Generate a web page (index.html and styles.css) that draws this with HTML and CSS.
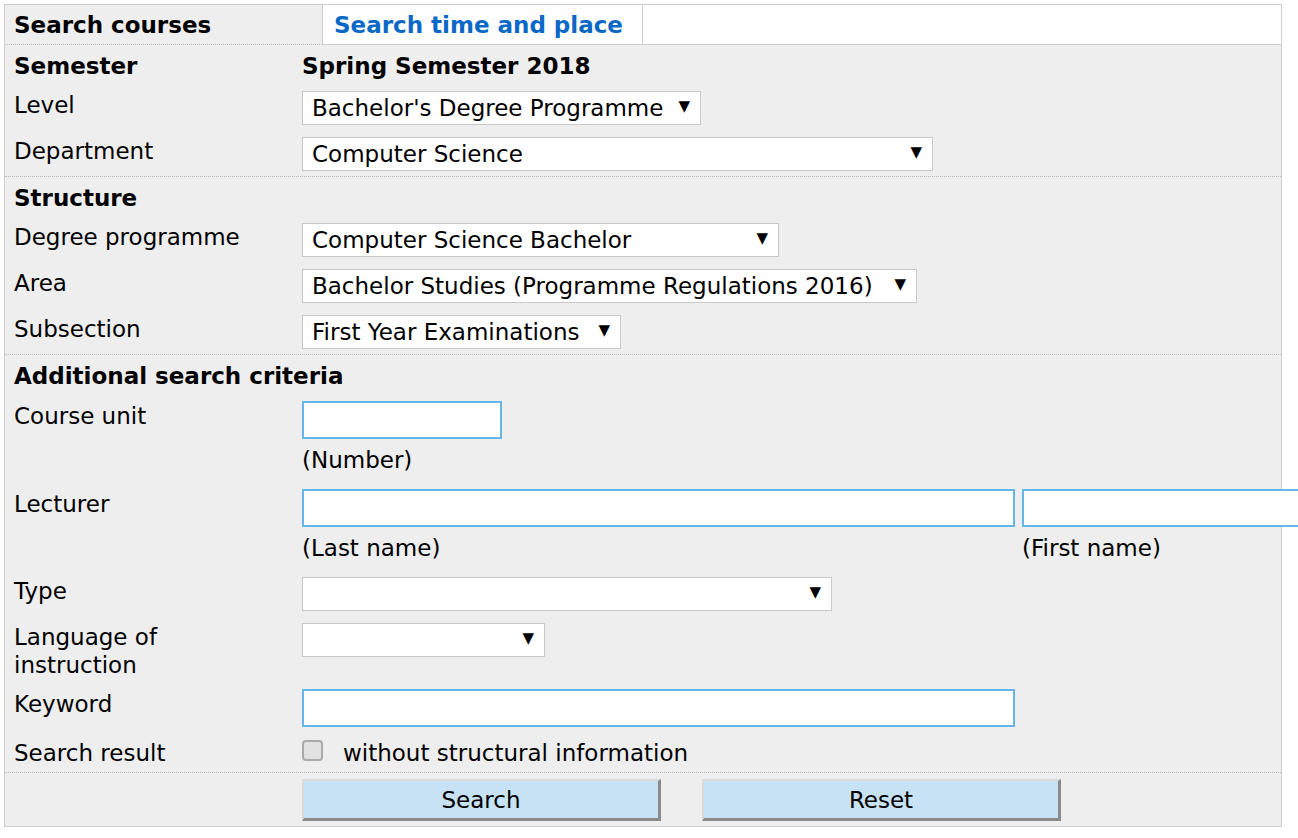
FILE: index.html
```html
<!DOCTYPE html>
<html lang="en">
<head>
<meta charset="utf-8">
<title>Search courses</title>
<link rel="stylesheet" href="styles.css">
</head>
<body>
<div class="panel">
  <div class="tabs">
    <div class="tab tab-current">Search courses</div>
    <a class="tab tab-link" href="#">Search time and place</a>
    <div class="tab-fill"></div>
  </div>

  <div class="section">
    <div class="row heading">
      <div class="lbl">Semester</div>
      <div class="val">Spring Semester 2018</div>
    </div>
    <div class="row">
      <div class="lbl">Level</div>
      <div class="val"><div class="sel w-level"><span>Bachelor's Degree Programme</span><span class="arrow">▼</span></div></div>
    </div>
    <div class="row">
      <div class="lbl">Department</div>
      <div class="val"><div class="sel w-dept"><span>Computer Science</span><span class="arrow">▼</span></div></div>
    </div>
  </div>

  <div class="section">
    <div class="row heading">
      <div class="lbl">Structure</div>
    </div>
    <div class="row">
      <div class="lbl">Degree programme</div>
      <div class="val"><div class="sel w-degree"><span>Computer Science Bachelor</span><span class="arrow">▼</span></div></div>
    </div>
    <div class="row">
      <div class="lbl">Area</div>
      <div class="val"><div class="sel w-area"><span>Bachelor Studies (Programme Regulations 2016)</span><span class="arrow">▼</span></div></div>
    </div>
    <div class="row">
      <div class="lbl">Subsection</div>
      <div class="val"><div class="sel w-sub"><span>First Year Examinations</span><span class="arrow">▼</span></div></div>
    </div>
  </div>

  <div class="section">
    <div class="row heading">
      <div class="lbl wide">Additional search criteria</div>
    </div>
    <div class="row">
      <div class="lbl lbl-input">Course unit</div>
      <div class="val">
        <div class="field">
          <input class="inp w-unit" type="text">
          <div class="hint">(Number)</div>
        </div>
      </div>
    </div>
    <div class="row">
      <div class="lbl lbl-input">Lecturer</div>
      <div class="val pair">
        <div class="field">
          <input class="inp w-long" type="text">
          <div class="hint">(Last name)</div>
        </div>
        <div class="field">
          <input class="inp w-long" type="text">
          <div class="hint">(First name)</div>
        </div>
      </div>
    </div>
    <div class="row">
      <div class="lbl">Type</div>
      <div class="val"><div class="sel w-type"><span></span><span class="arrow">▼</span></div></div>
    </div>
    <div class="row row-tall">
      <div class="lbl">Language of instruction</div>
      <div class="val"><div class="sel w-lang"><span></span><span class="arrow">▼</span></div></div>
    </div>
    <div class="row">
      <div class="lbl lbl-input">Keyword</div>
      <div class="val"><input class="inp w-long" type="text"></div>
    </div>
    <div class="row">
      <div class="lbl">Search result</div>
      <div class="val check">
        <span class="box"></span>
        <span>without structural information</span>
      </div>
    </div>
  </div>

  <div class="section buttons">
    <div class="row">
      <div class="lbl"></div>
      <div class="val btns">
        <button class="btn" type="button">Search</button>
        <button class="btn" type="button">Reset</button>
      </div>
    </div>
  </div>
</div>
</body>
</html>
```

FILE: styles.css
```css
html {
  overflow: hidden;
}

body {
  margin: 0;
  background: #ffffff;
  font-family: "DejaVu Sans", Verdana, sans-serif;
  font-size: 23px;
  color: #000;
}

.panel {
  box-sizing: border-box;
  width: 1278px;
  margin: 4px 0 0 4px;
  border: 1px solid #cfcfcf;
  background: #eeeeee;
}

/* tabs */
.tabs {
  display: flex;
  height: 40px;
}

.tab {
  box-sizing: border-box;
  height: 40px;
  line-height: 41px;
  font-weight: bold;
  white-space: nowrap;
}

.tab-current {
  width: 317px;
  padding-left: 9px;
  border-bottom: 1px dotted #bdbdbd;
}

.tab-link {
  width: 321px;
  padding-left: 11px;
  background: #fff;
  color: #0a68c6;
  text-decoration: none;
  border-left: 1px solid #cfcfcf;
  border-right: 1px solid #cfcfcf;
  border-bottom: 1px solid #cfcfcf;
}

.tab-fill {
  flex: 1;
  background: #fff;
  border-bottom: 1px solid #cfcfcf;
}

/* sections */
.section {
  display: flex;
  flex-direction: column;
  gap: 12px;
  padding: 7px 0 5px 9px;
}

.section + .section {
  border-top: 1px dotted #bdbdbd;
}

.section:first-of-type {
  padding-bottom: 6px;
}

.row {
  display: grid;
  grid-template-columns: 288px 1fr;
  align-items: start;
}

.lbl,
.val {
  line-height: 28px;
}

.lbl {
  padding-right: 24px;
}

.heading {
  font-weight: bold;
  margin-bottom: -1px;
}

.lbl.wide {
  grid-column: 1 / 3;
}

.lbl-input {
  padding-top: 1px;
}

.row-tall {
  margin-bottom: -2px;
}

/* select-like boxes */
.sel {
  box-sizing: border-box;
  display: flex;
  align-items: center;
  justify-content: space-between;
  height: 34px;
  padding: 0 10px 0 9px;
  background: #fff;
  border: 1px solid #c8c8c8;
  white-space: nowrap;
}

.arrow {
  font-size: 15px;
  line-height: 1;
  margin-top: -4px;
}

.w-level { width: 399px; }
.w-dept { width: 631px; }
.w-degree { width: 477px; }
.w-area { width: 615px; }
.w-sub { width: 319px; }
.w-type { width: 530px; }
.w-lang { width: 243px; }

/* text inputs */
.inp {
  box-sizing: border-box;
  display: block;
  height: 38px;
  margin: 0;
  padding: 0 8px;
  background: #fff;
  border: 2px solid #66b5ea;
  font: inherit;
}

.w-unit { width: 200px; }
.w-long { width: 713px; }

.pair {
  display: flex;
  gap: 7px;
}

.field {
  display: flex;
  flex-direction: column;
}

.hint {
  margin-top: 7px;
  padding-bottom: 3px;
  line-height: 28px;
}

/* checkbox */
.check {
  display: flex;
  align-items: center;
  gap: 20px;
}

.box {
  box-sizing: border-box;
  width: 21px;
  height: 21px;
  margin-top: -6px;
  border: 2px solid #aaaaaa;
  border-radius: 4px;
  background: #e2e2e2;
}

/* buttons */
.buttons {
  padding-top: 6px;
  padding-bottom: 5px;
}

.btns {
  display: flex;
  gap: 41px;
}

.btn {
  box-sizing: border-box;
  width: 359px;
  height: 42px;
  margin: 0;
  padding: 0;
  background: #c6e2f4;
  border-style: solid;
  border-width: 2px 3px 3px 2px;
  border-color: #dadada #8a8a8a #8a8a8a #dadada;
  font: inherit;
  color: #000;
}
```
